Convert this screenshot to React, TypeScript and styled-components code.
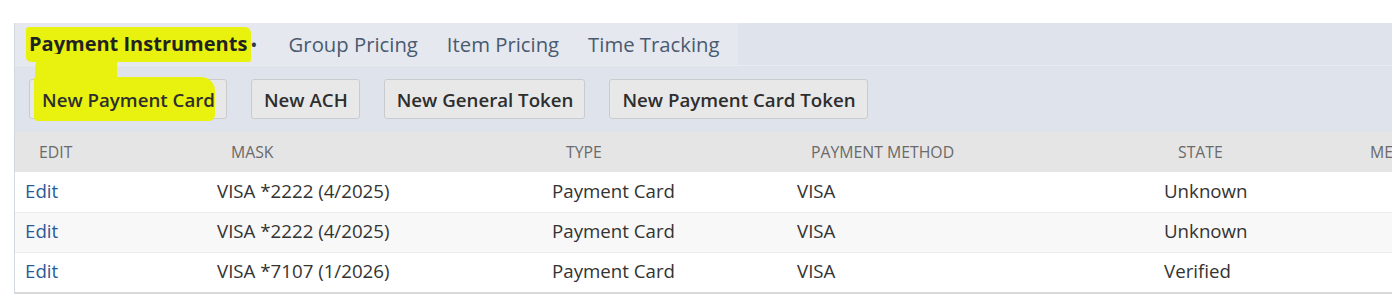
import React from "react";
import styled, { createGlobalStyle } from "styled-components";

const Global = createGlobalStyle`
  html, body { margin: 0; padding: 0; background: #ffffff; }
  body { font-family: "Open Sans", "Liberation Sans", sans-serif; overflow: hidden; }
`;

const Page = styled.div`
  width: 1392px;
  height: 305px;
  padding: 23px 0 0 14px;
  box-sizing: border-box;
  overflow: hidden;
`;

const Panel = styled.div`
  width: 1500px;
  background: #dfe3eb;
  border-left: 1px solid #d3d7de;
  display: flex;
  flex-direction: column;
`;

const TabBar = styled.div`
  display: flex;
  height: 42px;
  border-bottom: 1px solid #e8ebf0;
`;

const TabStrip = styled.div`
  display: flex;
  align-items: center;
  background: #e5e8ee;
  padding: 0 4px 0 0;
`;

const Tab = styled.div<{ $active?: boolean; $first?: boolean }>`
  display: flex;
  align-items: center;
  height: 100%;
  padding: 0 14px 0 ${(p) => (p.$active ? "14px" : p.$first ? "0" : "15px")};
  font-size: ${(p) => (p.$active ? "20px" : "20.3px")};
  font-weight: ${(p) => (p.$active ? 700 : 400)};
  color: ${(p) => (p.$active ? "#1f2420" : "#4a5a70")};
  white-space: nowrap;
`;

const Marker = styled.span`
  background: #e9f20f;
  padding: 3px 4px 5px 3px;
  margin-left: -3px;
  border-radius: 3px 6px 2px 5px;
`;

const Dot = styled.span`
  margin-left: 0px;
  margin-right: 18px;
  color: #2b3a4d;
  font-size: 14px;
`;

const ButtonRow = styled.div`
  display: flex;
  gap: 24px;
  padding: 13px 0 13px 14px;
`;

const Button = styled.button`
  position: relative;
  height: 40px;
  padding: 0 11px 0 12px;
  background: #e8e8e8;
  border: 1px solid #c9cbce;
  border-radius: 3px;
  font-family: "Open Sans", "Liberation Sans", sans-serif;
  font-size: 18.7px;
  font-weight: 600;
  color: #2e2e2e;
  white-space: nowrap;
`;

const ButtonMark = styled.span`
  position: relative;
  z-index: 0;
  &::before {
    content: "";
    position: absolute;
    z-index: -1;
    left: -8px;
    right: 0px;
    top: -10px;
    bottom: -9px;
    background: #e9f20f;
    border-radius: 2px 14px 6px 4px;
  }
  &::after {
    content: "";
    position: absolute;
    z-index: -1;
    left: -7px;
    width: 82px;
    top: -33px;
    height: 26px;
    background: #e9f20f;
    border-radius: 14px 3px 0 0;
  }
`;

const Table = styled.div`
  background: #ffffff;
  border-bottom: 2px solid #d9d9d9;
`;

const cols = "192px 335px 245px 367px 192px 1fr";

const HeadRow = styled.div`
  display: grid;
  grid-template-columns: ${cols};
  height: 40px;
  background: #e5e5e5;
  align-items: center;
`;

const HeadCell = styled.div`
  padding-left: 24px;
  font-size: 15.8px;
  color: #6a6a6a;
  text-transform: uppercase;
  white-space: nowrap;
`;

const Row = styled.div<{ $alt?: boolean }>`
  display: grid;
  grid-template-columns: ${cols};
  height: 40px;
  align-items: center;
  background: ${(p) => (p.$alt ? "#f8f8f8" : "#ffffff")};
  border-top: 1px solid #ececec;
  box-sizing: border-box;
  &:first-of-type { border-top: none; }
`;

const Cell = styled.div`
  padding: 0 0 4px 10px;
  font-size: 18.7px;
  color: #333333;
  white-space: nowrap;
`;

const EditLink = styled.a`
  color: #2c5a96;
  text-decoration: none;
`;

const rows = [
  { mask: "VISA *2222 (4/2025)", state: "Unknown" },
  { mask: "VISA *2222 (4/2025)", state: "Unknown" },
  { mask: "VISA *7107 (1/2026)", state: "Verified" },
];

export default function App() {
  return (
    <>
      <Global />
      <Page>
        <Panel>
          <TabBar>
            <TabStrip>
              <Tab $active>
                <Marker>Payment Instruments</Marker>
                <Dot>•</Dot>
              </Tab>
              <Tab $first>Group Pricing</Tab>
              <Tab>Item Pricing</Tab>
              <Tab>Time Tracking</Tab>
            </TabStrip>
          </TabBar>
          <ButtonRow>
            <Button>
              <ButtonMark>New Payment Card</ButtonMark>
            </Button>
            <Button>New ACH</Button>
            <Button>New General Token</Button>
            <Button>New Payment Card Token</Button>
          </ButtonRow>
          <Table>
            <HeadRow>
              <HeadCell>Edit</HeadCell>
              <HeadCell>Mask</HeadCell>
              <HeadCell>Type</HeadCell>
              <HeadCell>Payment Method</HeadCell>
              <HeadCell>State</HeadCell>
              <HeadCell>Memo</HeadCell>
            </HeadRow>
            <div>
              {rows.map((r, i) => (
                <Row key={i} $alt={i === 1}>
                  <Cell>
                    <EditLink href="#">Edit</EditLink>
                  </Cell>
                  <Cell>{r.mask}</Cell>
                  <Cell>Payment Card</Cell>
                  <Cell>VISA</Cell>
                  <Cell>{r.state}</Cell>
                  <Cell></Cell>
                </Row>
              ))}
            </div>
          </Table>
        </Panel>
      </Page>
    </>
  );
}
